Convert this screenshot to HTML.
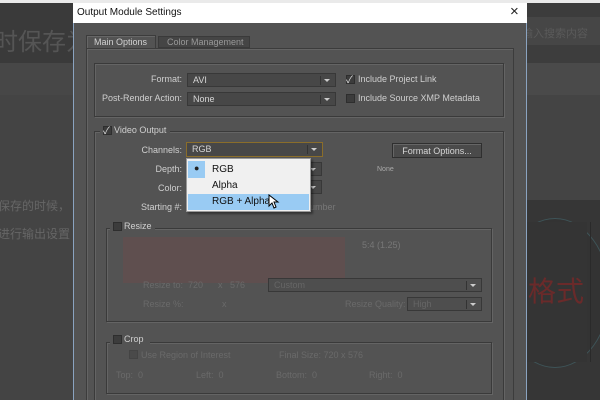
<!DOCTYPE html>
<html><head><meta charset="utf-8"><style>
*{margin:0;padding:0;box-sizing:border-box}
html,body{width:600px;height:400px;overflow:hidden}
body{position:relative;background:#444;font-family:"Liberation Sans","Noto Sans CJK SC",sans-serif;font-size:9px;color:#cfcfcf}
.a{position:absolute;white-space:nowrap}
.r{text-align:right}
.dd{position:absolute;height:14px;background:#474747;border:1px solid #383838;color:#d6d6d6;padding:1px 0 0 5px;font-size:9px}
.dd:after{content:"";position:absolute;right:5px;top:5px;border-left:3px solid transparent;border-right:3px solid transparent;border-top:3px solid #ccc}
.dd:before{content:"";position:absolute;right:14px;top:2px;width:1px;height:9px;background:#333}
.box{position:absolute;border:1px solid #3a3a3a;box-shadow:1px 1px 0 #646464, inset 1px 1px 0 #646464}
.cb{position:absolute;width:9px;height:9px;background:#3c3c3c;border:1px solid #2e2e2e}
.dim{color:#6a6a6a}
</style></head><body>
<div class="a" style="left:0;top:0;width:600px;height:3px;background:#eaeaea"></div>
<div class="a" style="left:0;top:3px;width:73px;height:60px;background:#3a3a3a"></div>
<div class="a" style="left:-6px;top:22px;font-size:24px;color:#555">时保存为</div>
<div class="a" style="left:0;top:63px;width:73px;height:32px;background:#474747"></div>
<div class="a" style="left:-2px;top:197px;font-size:12px;color:#666">保存的时候，</div>
<div class="a" style="left:-2px;top:225px;font-size:12px;color:#666">进行输出设置</div>
<div class="a" style="left:527px;top:3px;width:73px;height:14px;background:#3c3c3c"></div>
<div class="a" style="left:527px;top:17px;width:73px;height:28px;background:#464646"></div>
<div class="a" style="left:522px;top:25px;font-size:11px;color:#5a5a5a">输入搜索内容</div>
<div class="a" style="left:527px;top:45px;width:73px;height:18px;background:#3d3d3d"></div>
<div class="a" style="left:527px;top:63px;width:73px;height:32px;background:#4a4a4a"></div>
<div class="a" style="left:527px;top:200px;width:73px;height:200px;background:#363636"></div>
<div class="a" style="left:500px;top:218px;width:110px;height:150px;border-radius:50%;border:1px solid #3e5458;background:#333"></div>
<div class="a" style="left:527px;top:222px;width:60px;height:140px;background:#343434"></div>
<div class="a" style="left:590px;top:222px;width:1px;height:140px;background:#2a2a2a"></div>
<div class="a" style="left:528px;top:270px;font-size:28px;color:#6a2a2a">格式</div>
<!-- dialog -->
<div class="a" style="left:73px;top:3px;width:454px;height:397px;background:#535353;border-left:1px solid #8aa3c0;border-right:1px solid #8aa3c0"></div>
<div class="a" style="left:73px;top:3px;width:454px;height:20px;background:#fff"></div>
<div class="a" style="left:77px;top:7px;font-size:10px;color:#111">Output Module Settings</div>
<div class="a" style="left:510px;top:3px;font-size:15px;color:#222">×</div>
<div class="a" style="left:86px;top:35px;width:70px;height:14px;background:#535353;border:1px solid #3c3c3c;border-bottom:none;box-shadow:inset 1px 1px 0 #666"></div>
<div class="a" style="left:94px;top:37px;color:#d2d2d2">Main Options</div>
<div class="a" style="left:158px;top:36px;width:92px;height:12px;background:#454545;border:1px solid #3a3a3a"></div>
<div class="a" style="left:167px;top:37px;color:#999">Color Management</div>
<div class="a" style="left:86px;top:48px;width:428px;height:352px;border:1px solid #3c3c3c;border-bottom:none;box-shadow:inset 1px 1px 0 #646464"></div>
<div class="box" style="left:94px;top:63px;width:410px;height:54px"></div>
<div class="a r" style="left:100px;top:74px;width:82px">Format:</div>
<div class="dd" style="left:187px;top:73px;width:149px">AVI</div>
<div class="a r" style="left:100px;top:93px;width:82px">Post-Render Action:</div>
<div class="dd" style="left:187px;top:92px;width:149px">None</div>
<div class="cb" style="left:346px;top:75px"></div><div class="a" style="left:346px;top:71px;font-size:10px;color:#ddd">✓</div>
<div class="a" style="left:358px;top:74px">Include Project Link</div>
<div class="cb" style="left:346px;top:94px"></div>
<div class="a" style="left:358px;top:93px">Include Source XMP Metadata</div>
<div class="box" style="left:94px;top:131px;width:410px;height:269px;border-bottom:none"></div>
<div class="a" style="left:100px;top:125px;width:70px;height:12px;background:#535353"></div>
<div class="cb" style="left:103px;top:126px"></div><div class="a" style="left:103px;top:122px;font-size:10px;color:#ddd">✓</div>
<div class="a" style="left:114px;top:125px">Video Output</div>
<div class="a r" style="left:100px;top:145px;width:82px">Channels:</div>
<div class="dd" style="left:186px;top:142px;width:137px;height:15px;border-color:#8a6d2a">RGB</div>
<div class="a r" style="left:100px;top:164px;width:82px">Depth:</div>
<div class="dd" style="left:186px;top:162px;width:136px"></div>
<div class="a r" style="left:100px;top:183px;width:82px">Color:</div>
<div class="dd" style="left:186px;top:180px;width:136px"></div>
<div class="a r" style="left:100px;top:202px;width:82px">Starting #:</div>
<div class="a" style="left:310px;top:202px;color:#777">umber</div>
<div class="a" style="left:392px;top:143px;width:90px;height:15px;background:#4a4a4a;border:1px solid #2f2f2f;box-shadow:inset 1px 1px 0 #666;text-align:center;padding-top:2px;color:#d6d6d6">Format Options...</div>
<div class="a" style="left:377px;top:166px;font-size:7px;color:#aaa">None</div>
<div class="a" style="left:186px;top:158px;width:125px;height:54px;background:#f0f0f0;border:1px solid #999;box-shadow:2px 2px 2px rgba(0,0,0,.4)"></div>
<div class="a" style="left:188px;top:161px;width:17px;height:17px;background:#99cbf3"></div>
<div class="a" style="left:194px;top:163px;font-size:9px;color:#222">●</div>
<div class="a" style="left:212px;top:164px;font-size:10px;color:#111">RGB</div>
<div class="a" style="left:212px;top:180px;font-size:10px;color:#111">Alpha</div>
<div class="a" style="left:188px;top:194px;width:121px;height:16px;background:#99cbf3"></div>
<div class="a" style="left:212px;top:196px;font-size:10px;color:#111">RGB + Alpha</div>
<svg class="a" style="left:268px;top:194px" width="12" height="16"><path d="M1 1 L1 12 L4 9 L6 14 L8 13 L6 8 L10 8 Z" fill="#fff" stroke="#000" stroke-width="1"/></svg>
<div class="box" style="left:106px;top:228px;width:386px;height:94px"></div>
<div class="a" style="left:110px;top:220px;width:45px;height:12px;background:#535353"></div>
<div class="cb" style="left:113px;top:222px"></div>
<div class="a" style="left:124px;top:221px">Resize</div>
<div class="a" style="left:123px;top:237px;width:222px;height:46px;background:#5f4f4f"></div>
<div class="a" style="left:362px;top:240px;color:#777">5:4 (1.25)</div>
<div class="a dim" style="left:143px;top:280px">Resize to:&nbsp;&nbsp;720&nbsp;&nbsp;&nbsp;&nbsp;&nbsp;&nbsp;x&nbsp;&nbsp;&nbsp;576</div>
<div class="dd" style="left:268px;top:278px;width:214px;color:#666;background:#4e4e4e">Custom</div>
<div class="a dim" style="left:143px;top:299px">Resize %:</div>
<div class="a dim" style="left:222px;top:299px">x</div>
<div class="a dim" style="left:345px;top:299px">Resize Quality:</div>
<div class="dd" style="left:407px;top:297px;width:75px;color:#666;background:#4e4e4e">High</div>
<div class="box" style="left:106px;top:342px;width:386px;height:52px"></div>
<div class="a" style="left:110px;top:333px;width:40px;height:12px;background:#535353"></div>
<div class="cb" style="left:113px;top:335px"></div>
<div class="a" style="left:124px;top:334px">Crop</div>
<div class="cb" style="left:129px;top:350px;border-color:#444;background:#4a4a4a"></div>
<div class="a dim" style="left:141px;top:350px">Use Region of Interest</div>
<div class="a dim" style="left:279px;top:350px">Final Size: 720 x 576</div>
<div class="a dim" style="left:116px;top:370px">Top:&nbsp;&nbsp;0</div>
<div class="a dim" style="left:196px;top:370px">Left:&nbsp;&nbsp;0</div>
<div class="a dim" style="left:276px;top:370px">Bottom:&nbsp;&nbsp;0</div>
<div class="a dim" style="left:369px;top:370px">Right:&nbsp;&nbsp;0</div>
</body></html>
